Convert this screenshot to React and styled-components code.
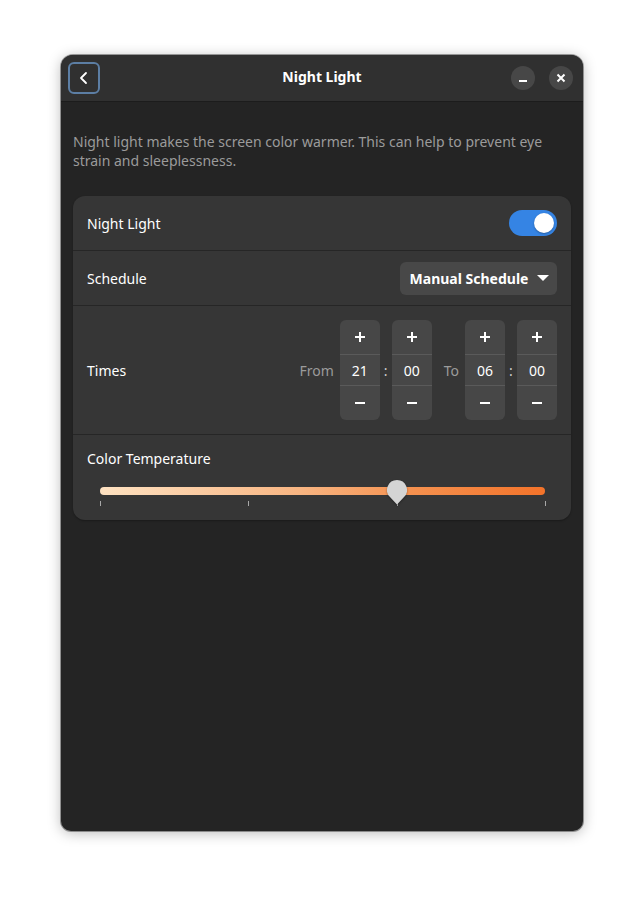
import React, { useState } from 'react';
import styled, { createGlobalStyle } from 'styled-components';

const GlobalStyle = createGlobalStyle`
  html, body {
    margin: 0;
    padding: 0;
    background: #ffffff;
  }
  body {
    font-family: 'Noto Sans', 'Open Sans', sans-serif;
  }
`;

const Page = styled.div`
  display: flex;
  justify-content: center;
  padding-top: 55px;
  height: 898px;
  box-sizing: border-box;
`;

const Window = styled.div`
  width: 522px;
  height: 776px;
  border-radius: 12px 12px 10px 10px;
  background: #242424;
  box-shadow: 0 2px 14px rgba(0, 0, 0, 0.28), 0 0 0 1px rgba(0, 0, 0, 0.35);
  overflow: hidden;
  display: flex;
  flex-direction: column;
`;

const HeaderBar = styled.header`
  height: 46px;
  flex-shrink: 0;
  background: #303030;
  border-bottom: 1px solid #1c1c1c;
  display: flex;
  align-items: center;
  padding: 0 10px 0 7px;
  position: relative;
`;

const BackButton = styled.button`
  width: 32px;
  height: 32px;
  box-sizing: border-box;
  border: 2px solid #5c7ea4;
  border-radius: 6px;
  background: transparent;
  display: flex;
  align-items: center;
  justify-content: center;
  padding: 0;
  color: #ffffff;
`;

const Title = styled.h1`
  position: absolute;
  left: 0;
  right: 0;
  top: 12px;
  line-height: 20px;
  text-align: center;
  margin: 0;
  font-size: 14px;
  font-weight: 700;
  color: #ffffff;
  pointer-events: none;
`;

const WindowControls = styled.div`
  margin-left: auto;
  display: flex;
  gap: 14px;
`;

const RoundButton = styled.button`
  width: 24px;
  height: 24px;
  border-radius: 50%;
  border: none;
  background: #474747;
  display: flex;
  align-items: center;
  justify-content: center;
  padding: 0;
`;

const Content = styled.main`
  padding: 30px 12px 0 12px;
  display: flex;
  flex-direction: column;
`;

const Description = styled.p`
  margin: 0 0 26px 0;
  font-size: 14px;
  line-height: 19px;
  color: #9b9b9b;
`;

const Card = styled.section`
  background: #363636;
  border-radius: 12px;
  box-shadow: 0 1px 2px rgba(0, 0, 0, 0.3);
  overflow: hidden;
`;

const Row = styled.div`
  display: flex;
  align-items: center;
  min-height: ${(p) => p.$height}px;
  box-sizing: border-box;
  padding: 0 14px;
  border-bottom: 1px solid #262626;
`;

const Label = styled.span`
  font-size: 14px;
  color: #ffffff;
  flex: 1;
`;

const SwitchTrack = styled.div`
  width: 48px;
  height: 26px;
  border-radius: 13px;
  background: ${(p) => (p.$on ? '#3584e4' : '#555')};
  display: flex;
  align-items: center;
  justify-content: ${(p) => (p.$on ? 'flex-end' : 'flex-start')};
  padding: 0 3px;
  box-sizing: border-box;
  cursor: pointer;
`;

const SwitchKnob = styled.div`
  width: 20px;
  height: 20px;
  border-radius: 50%;
  background: #ffffff;
  box-shadow: 0 1px 2px rgba(0, 0, 0, 0.3);
`;

const Dropdown = styled.button`
  height: 33px;
  width: 157px;
  border: none;
  border-radius: 6px;
  background: #484848;
  color: #ffffff;
  font-family: inherit;
  font-size: 14px;
  font-weight: 700;
  display: flex;
  align-items: center;
  justify-content: center;
  gap: 9px;
  padding: 0 0 0 2px;
`;

const Caret = styled.span`
  width: 0;
  height: 0;
  border-left: 6px solid transparent;
  border-right: 6px solid transparent;
  border-top: 6px solid #ffffff;
`;

const TimeGroup = styled.div`
  display: flex;
  align-items: center;
`;

const TimeLabel = styled.span`
  font-size: 14px;
  color: #9b9b9b;
  margin: 0 6px 0 ${(p) => p.$gap}px;
`;

const Colon = styled.span`
  width: 12px;
  text-align: center;
  font-size: 14px;
  color: #cfcfcf;
`;

const Spin = styled.div`
  width: 40px;
  height: 100px;
  border-radius: 6px;
  background: #474747;
  display: grid;
  grid-template-rows: 34px 32px 34px;
`;

const SpinCell = styled.div`
  display: flex;
  align-items: center;
  justify-content: center;
  color: #ffffff;
  font-size: 14px;
  border-top: ${(p) => (p.$divider ? '1px solid #5a5a5a' : 'none')};
  border-bottom: ${(p) => (p.$divider ? '1px solid #5a5a5a' : 'none')};
`;

const TempRow = styled.div`
  padding: 12px 14px 0 14px;
  height: 85px;
  box-sizing: border-box;
`;

const SliderBox = styled.div`
  position: relative;
  margin: 11px 12px 0 13px;
  height: 30px;
`;

const Track = styled.div`
  position: absolute;
  left: 0;
  right: 0;
  top: 7px;
  height: 8px;
  border-radius: 4px;
  background: linear-gradient(90deg, #fee2c2 0%, #f8b582 45%, #f5914f 70%, #f3732a 100%);
`;

const Tick = styled.div`
  position: absolute;
  top: 21px;
  width: 1px;
  height: 5px;
  background: #a8a8a8;
`;

const Knob = styled.svg`
  position: absolute;
  top: 0;
  width: 20px;
  height: 25px;
  margin-left: -10px;
  filter: drop-shadow(0 1px 1px rgba(0, 0, 0, 0.35));
`;

const Spinner = ({ value }) => (
  <Spin>
    <SpinCell>
      <svg width="12" height="12" viewBox="0 0 12 12">
        <path d="M6 1v10M1 6h10" stroke="#fff" strokeWidth="2" />
      </svg>
    </SpinCell>
    <SpinCell $divider>{value}</SpinCell>
    <SpinCell>
      <svg width="12" height="12" viewBox="0 0 12 12">
        <path d="M1 6h10" stroke="#fff" strokeWidth="2" />
      </svg>
    </SpinCell>
  </Spin>
);

const App = () => {
  const [on, setOn] = useState(true);
  const value = 0.6667;
  const ticks = [0, 0.3333, 0.6667, 1];

  return (
    <>
      <GlobalStyle />
      <Page>
        <Window>
          <HeaderBar>
            <BackButton aria-label="back">
              <svg width="16" height="16" viewBox="0 0 16 16">
                <path d="M10 3L5 8l5 5" stroke="#fff" strokeWidth="1.8" fill="none" strokeLinecap="round" strokeLinejoin="round" />
              </svg>
            </BackButton>
            <Title>Night Light</Title>
            <WindowControls>
              <RoundButton aria-label="minimize">
                <svg width="10" height="10" viewBox="0 0 10 10">
                  <rect x="1" y="7" width="8" height="2" fill="#fff" />
                </svg>
              </RoundButton>
              <RoundButton aria-label="close">
                <svg width="10" height="10" viewBox="0 0 10 10">
                  <path d="M1.5 1.5l7 7M8.5 1.5l-7 7" stroke="#fff" strokeWidth="2" />
                </svg>
              </RoundButton>
            </WindowControls>
          </HeaderBar>
          <Content>
            <Description>
              Night light makes the screen color warmer. This can help to prevent eye strain and sleeplessness.
            </Description>
            <Card>
              <Row $height={55}>
                <Label>Night Light</Label>
                <SwitchTrack $on={on} onClick={() => setOn(!on)}>
                  <SwitchKnob />
                </SwitchTrack>
              </Row>
              <Row $height={55}>
                <Label>Schedule</Label>
                <Dropdown>
                  Manual Schedule
                  <Caret />
                </Dropdown>
              </Row>
              <Row $height={129}>
                <Label>Times</Label>
                <TimeGroup>
                  <TimeLabel $gap={0}>From</TimeLabel>
                  <Spinner value="21" />
                  <Colon>:</Colon>
                  <Spinner value="00" />
                  <TimeLabel $gap={12}>To</TimeLabel>
                  <Spinner value="06" />
                  <Colon>:</Colon>
                  <Spinner value="00" />
                </TimeGroup>
              </Row>
              <TempRow>
                <Label>Color Temperature</Label>
                <SliderBox>
                  <Track />
                  {ticks.map((t) => (
                    <Tick key={t} style={{ left: `${t * 100}%` }} />
                  ))}
                  <Knob viewBox="0 0 20 25" style={{ left: `${value * 100}%` }}>
                    <path d="M10 0a10 10 0 0 1 6.8 17.3L10 24.5l-6.8-7.2A10 10 0 0 1 10 0z" fill="#d4d4d4" />
                  </Knob>
                </SliderBox>
              </TempRow>
            </Card>
          </Content>
        </Window>
      </Page>
    </>
  );
};

export default App;
